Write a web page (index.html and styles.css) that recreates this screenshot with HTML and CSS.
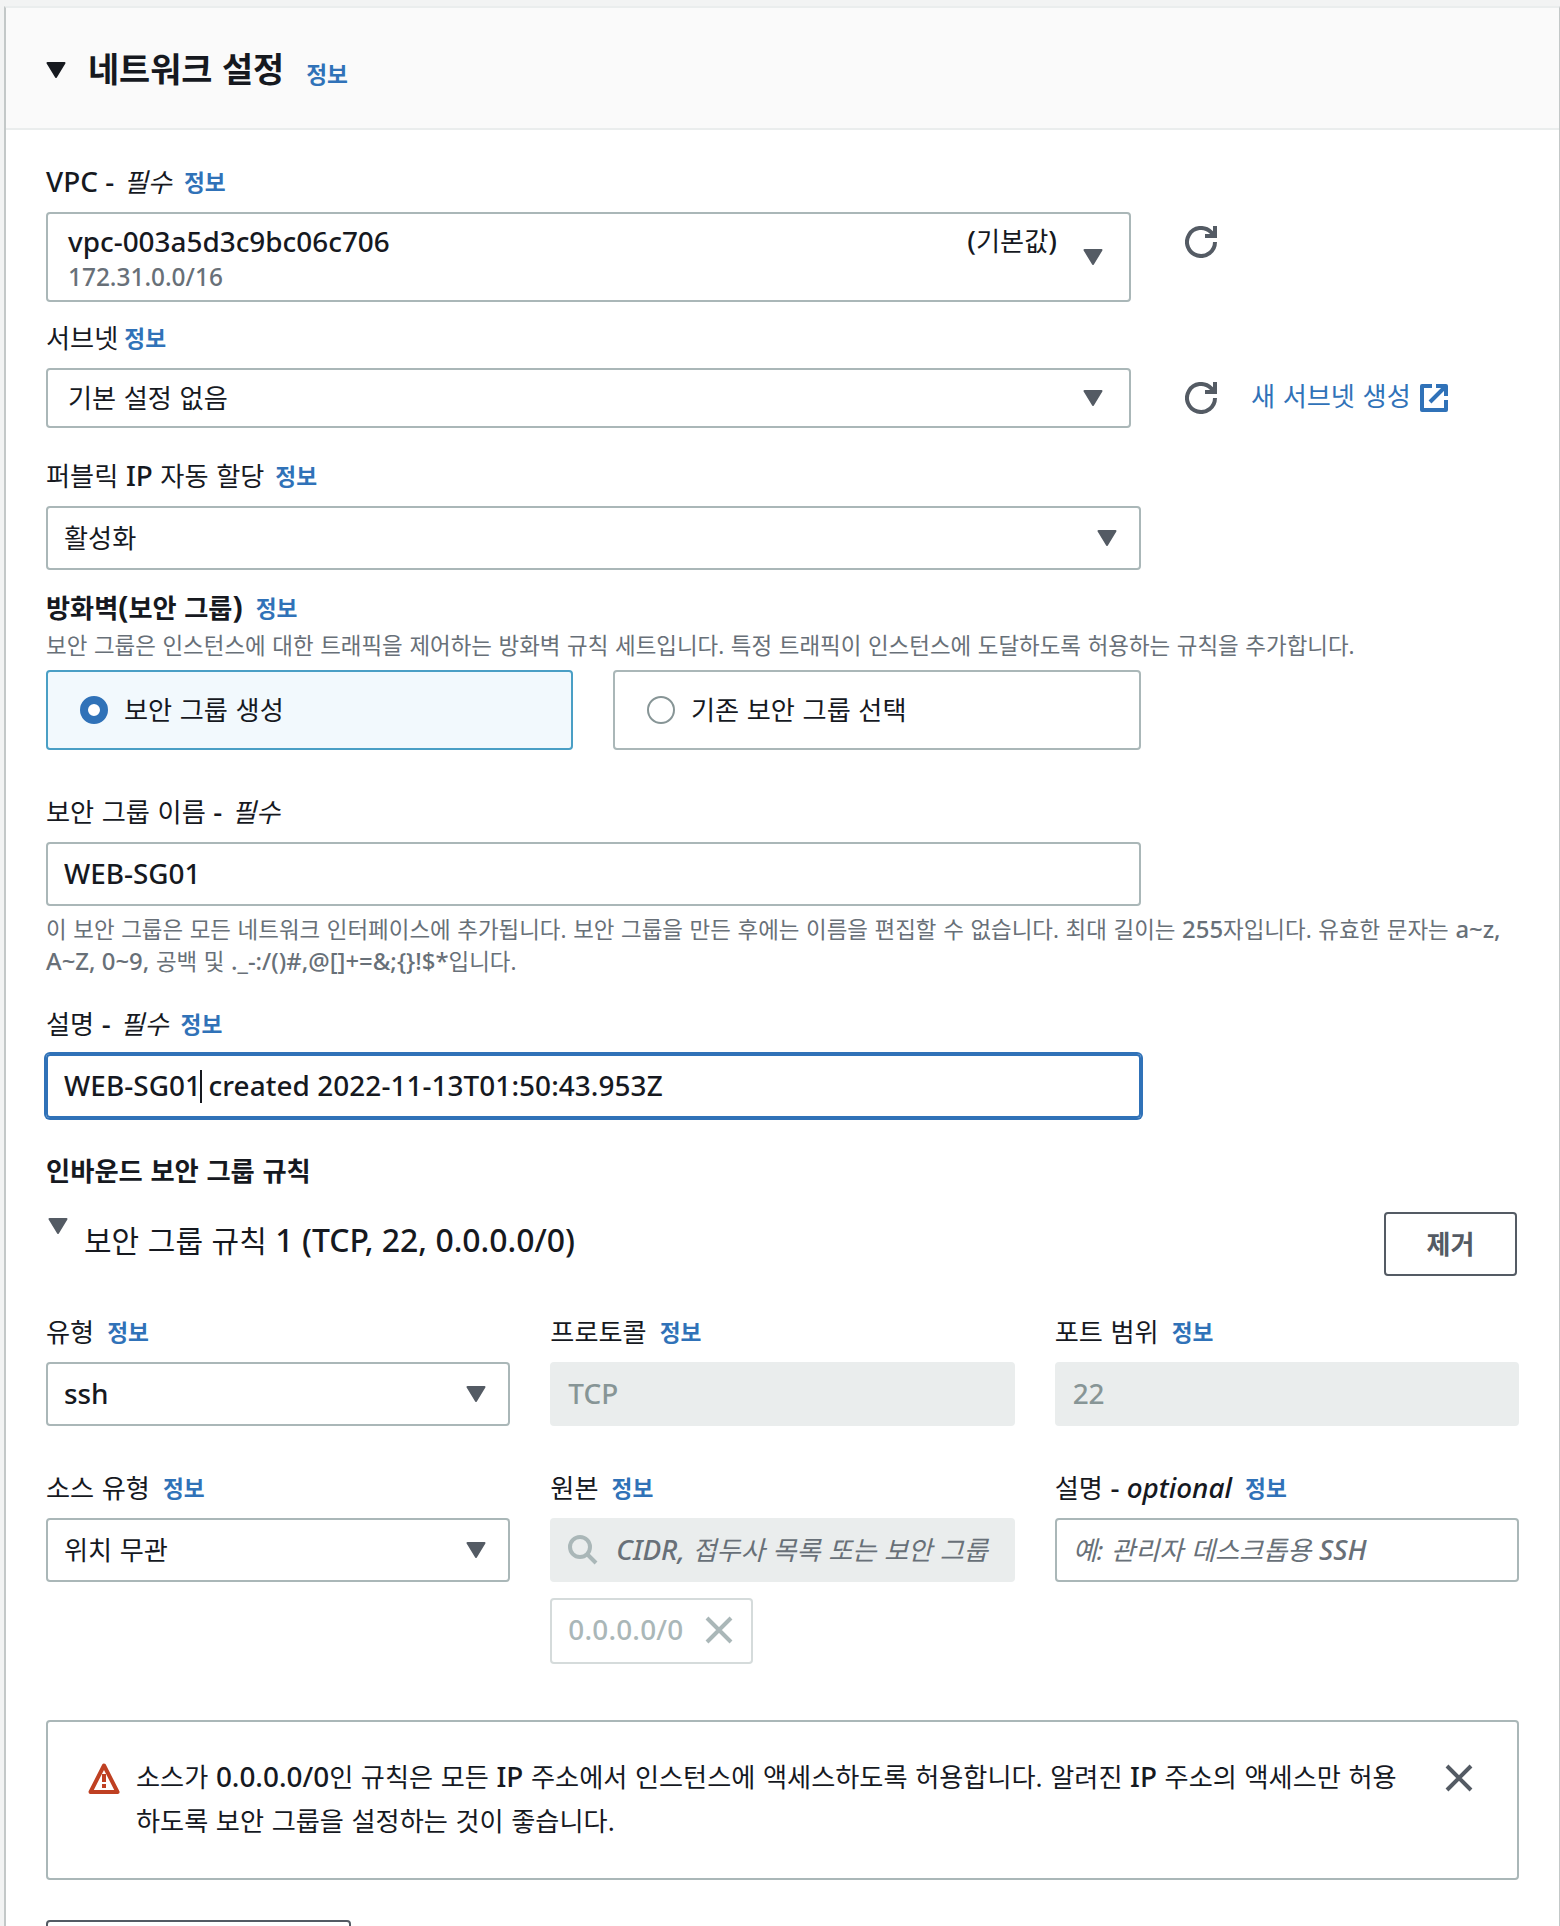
FILE: index.html
```html
<!DOCTYPE html>
<html lang="ko">
<head>
    <meta charset="utf-8">
    <title>네트워크 설정</title>
    <link rel="stylesheet" href="styles.css">
</head>
<body>
    <svg class="defs" width="0" height="0">
        <symbol id="caret" viewBox="0 0 20 16"><path d="M1.5 1h17L10 15z" fill="currentColor" stroke="currentColor" stroke-width="2" stroke-linejoin="round"/></symbol>
        <symbol id="refresh" viewBox="0 0 32 32"><path d="M30 16a14 14 0 1 1-4-9.8l4 4M30 0v10H20" fill="none" stroke="currentColor" stroke-width="4"/></symbol>
        <symbol id="external" viewBox="0 0 28 28"><path d="M12 2H2v24h24V16M16 2h10v10M26 2L10 18" fill="none" stroke="currentColor" stroke-width="4" stroke-linejoin="round"/></symbol>
        <symbol id="search" viewBox="0 0 30 30"><path d="M19.5 19.5l8.5 8.5" fill="none" stroke="currentColor" stroke-width="4"/><circle cx="12" cy="12" r="10" fill="none" stroke="currentColor" stroke-width="4"/></symbol>
        <symbol id="close" viewBox="0 0 28 28"><path d="M2 2l24 24M26 2L2 26" fill="none" stroke="currentColor" stroke-width="4"/></symbol>
        <symbol id="warning" viewBox="0 0 32 32"><path d="M16 3.5L29.5 30H2.5z" fill="none" stroke="currentColor" stroke-width="4" stroke-linejoin="round"/><path d="M16 12v8M16 22v4" stroke="currentColor" stroke-width="4"/></symbol>
    </svg>

    <section class="panel">
        <header class="panel-header">
            <svg class="caret"><use href="#caret"/></svg>
            <h2>네트워크 설정</h2>
            <a class="info">정보</a>
        </header>

        <div class="panel-body">
            <div class="field">
                <div class="label"><span><span class="en">VPC -</span> <em>필수</em></span><a class="info">정보</a></div>
                <div class="row">
                    <div class="control select vpc">
                        <div class="option">
                            <span class="en">vpc-003a5d3c9bc06c706</span>
                            <small>172.31.0.0/16</small>
                        </div>
                        <span class="tag"><span class="en">(</span>기본값<span class="en">)</span></span>
                        <svg class="caret"><use href="#caret"/></svg>
                    </div>
                    <svg class="refresh"><use href="#refresh"/></svg>
                </div>
            </div>

            <div class="field subnet">
                <div class="label tight"><span>서브넷</span><a class="info">정보</a></div>
                <div class="row">
                    <div class="control select short">
                        <span>기본 설정 없음</span>
                        <svg class="caret"><use href="#caret"/></svg>
                    </div>
                    <svg class="refresh"><use href="#refresh"/></svg>
                    <a class="link"><span>새 서브넷 생성</span><svg class="external"><use href="#external"/></svg></a>
                </div>
            </div>

            <div class="field public-ip">
                <div class="label wide"><span>퍼블릭 <span class="en">IP</span> 자동 할당</span><a class="info">정보</a></div>
                <div class="control select">
                    <span>활성화</span>
                    <svg class="caret"><use href="#caret"/></svg>
                </div>
            </div>

            <div class="field firewall">
                <div class="label wide"><b>방화벽<span class="paren">(</span>보안 그룹<span class="paren">)</span></b><a class="info">정보</a></div>
                <p class="hint">보안 그룹은 인스턴스에 대한 트래픽을 제어하는 방화벽 규칙 세트입니다. 특정 트래픽이 인스턴스에 도달하도록 허용하는 규칙을 추가합니다.</p>
                <div class="tiles">
                    <div class="tile selected"><i class="radio"></i>보안 그룹 생성</div>
                    <div class="tile"><i class="radio"></i>기존 보안 그룹 선택</div>
                </div>
            </div>

            <div class="field sg-name">
                <div class="label"><span>보안 그룹 이름 <span class="en">-</span> <em>필수</em></span></div>
                <div class="control"><span class="en">WEB-SG01</span></div>
                <p class="hint">이 보안 그룹은 모든 네트워크 인터페이스에 추가됩니다. 보안 그룹을 만든 후에는 이름을 편집할 수 없습니다. 최대 길이는 <span class="en">255</span>자입니다. 유효한 문자는 <span class="en">a~z,</span><br><span class="en">A~Z, 0~9,</span> 공백 및 <span class="en">._-:/()#,@[]+=&amp;;{}!$*</span>입니다.</p>
            </div>

            <div class="field sg-desc">
                <div class="label"><span>설명 <span class="en">-</span> <em>필수</em></span><a class="info">정보</a></div>
                <div class="control focused"><span class="en">WEB-SG01<i class="cursor"></i> created 2022-11-13T01:50:43.953Z</span></div>
            </div>

            <h3>인바운드 보안 그룹 규칙</h3>
            <div class="rule">
                <svg class="caret"><use href="#caret"/></svg>
                <span class="rule-title">보안 그룹 규칙 <span class="en">1 (TCP, 22, 0.0.0.0/0)</span></span>
                <button>제거</button>
            </div>

            <div class="grid">
                <div class="field">
                    <div class="label wide"><span>유형</span><a class="info">정보</a></div>
                    <div class="control select"><span class="en">ssh</span><svg class="caret"><use href="#caret"/></svg></div>
                </div>
                <div class="field">
                    <div class="label wide"><span>프로토콜</span><a class="info">정보</a></div>
                    <div class="control disabled"><span class="en">TCP</span></div>
                </div>
                <div class="field">
                    <div class="label wide"><span>포트 범위</span><a class="info">정보</a></div>
                    <div class="control disabled"><span class="en">22</span></div>
                </div>
                <div class="field">
                    <div class="label wide"><span>소스 유형</span><a class="info">정보</a></div>
                    <div class="control select"><span>위치 무관</span><svg class="caret"><use href="#caret"/></svg></div>
                </div>
                <div class="field">
                    <div class="label wide"><span>원본</span><a class="info">정보</a></div>
                    <div class="control disabled"><svg class="search-icon"><use href="#search"/></svg><em class="placeholder"><span class="en">CIDR,</span> 접두사 목록 또는 보안 그룹</em></div>
                    <div class="token"><span class="en">0.0.0.0/0</span><svg class="close"><use href="#close"/></svg></div>
                </div>
                <div class="field">
                    <div class="label wide"><span>설명 <span class="en">- <i>optional</i></span></span><a class="info">정보</a></div>
                    <div class="control"><em class="placeholder">예: 관리자 데스크톱용 <span class="en">SSH</span></em></div>
                </div>
            </div>

            <div class="alert">
                <svg class="warning"><use href="#warning"/></svg>
                <p>소스가 <span class="en">0.0.0.0/0</span>인 규칙은 모든 <span class="en">IP</span> 주소에서 인스턴스에 액세스하도록 허용합니다. 알려진 <span class="en">IP</span> 주소의 액세스만 허용<br>하도록 보안 그룹을 설정하는 것이 좋습니다.</p>
                <svg class="close"><use href="#close"/></svg>
            </div>

            <button class="add-rule"></button>
        </div>
    </section>
</body>
</html>
```

FILE: styles.css
```css
* { box-sizing: border-box; }
body { margin: 0; height: 1926px; overflow: hidden; padding: 6px 0 0 4px; background: #f2f3f3; color: #16191f; font: 26.2px/36px "Noto Sans", "Noto Sans CJK KR", sans-serif; word-spacing: 0.03em; }
h2, h3, p { margin: 0; }
svg { display: block; flex: none; }
.defs { position: absolute; }

/* latin runs sit slightly larger and heavier than the hangul */
.en { font-size: 1.065em; font-weight: 500; line-height: 1; word-spacing: 0; }
.paren { font-size: 1.15em; line-height: 1; }
.info { color: #3072b8; font-size: 22.7px; font-weight: bold; }

.panel { height: 1940px; background: #fff; border-top: 2px solid #eaeded; border-left: 2px solid #c3c8c8; border-right: 1px solid #c3c8c8; }
.panel-header { display: flex; align-items: center; height: 122px; padding: 2px 40px 0; background: #fafafa; border-bottom: 2px solid #eaeded; }
.panel-header h2 { margin: 0 22px 0 22px; font-size: 33.8px; line-height: 48px; }
.panel-header .info { padding-top: 11px; }
.panel-body { padding: 34px 40px 0; }

.caret { width: 20px; height: 16px; color: #545b64; }
.panel-header .caret { margin-top: 2px; color: #16191f; }
.refresh { width: 32px; height: 32px; color: #545b64; }
.close { width: 28px; height: 28px; color: #545b64; }

.label { display: flex; align-items: center; gap: 12px; height: 36px; margin-bottom: 12px; white-space: nowrap; }
.label.tight { gap: 6px; }
.label.wide { gap: 13px; }
.label .info { padding-top: 1px; }
.label em { margin-left: 2px; }

.row { display: flex; }
.row .refresh { margin: 14px 0 0 54px; }
.control { display: flex; align-items: center; width: 1095px; height: 64px; padding: 0 16px; border: 2px solid #aab7b8; border-radius: 4px; white-space: nowrap; }
.select { justify-content: space-between; padding-right: 22px; }
.row .control { width: 1085px; padding: 0 26px 0 20px; }
.control.short { height: 60px; }
.control.vpc { height: 90px; }
.option { display: flex; flex-direction: column; flex: 1; padding-top: 3px; }
.option .en { line-height: 36px; }
.option small { color: #687078; font-size: 24.4px; font-weight: 500; line-height: 35px; }
.tag { align-self: flex-start; margin: 9px 26px 0 0; }

.subnet { margin-top: 18px; }
.public-ip { margin-top: 30px; }
.public-ip .label.wide { gap: 11px; }
.firewall { margin-top: 20px; }
.sg-name { margin-top: 44px; }
.sg-desc { margin-top: 28px; }

.link { display: flex; align-items: center; gap: 9px; height: 60px; margin-left: 34px; color: #3072b8; }
.link span { padding-bottom: 4px; }
.external { width: 28px; height: 28px; }

.hint { color: #687078; font-size: 22.45px; line-height: 32px; white-space: nowrap; }
.firewall .label { margin-bottom: 4px; }
.sg-name .hint { margin-top: 8px; }

.tiles { display: grid; grid-template-columns: 527px 528px; gap: 40px; width: 1095px; margin-top: 8px; }
.tile { display: flex; align-items: center; gap: 16px; height: 80px; padding: 0 32px; border: 2px solid #aab7b8; border-radius: 4px; }
.tile.selected { background: #f2f9fd; border-color: #4a9fc5; }
.radio { width: 28px; height: 28px; border: 2px solid #879596; border-radius: 50%; background: #fff; }
.selected .radio { border: 8px solid #3072b8; }

.focused { border-color: #3072b8; box-shadow: 0 0 0 2px #3072b8; }
.focused .en { padding-top: 1px; letter-spacing: 0.08px; }
.cursor { display: inline-block; width: 2px; height: 33px; margin: 0 -1px 0 -1px; background: #16191f; vertical-align: -7px; }

h3 { margin-top: 35px; font-size: 26.3px; line-height: 36px; }
.rule { display: flex; margin-top: 23px; padding-right: 2px; height: 64px; }
.rule .caret { margin: 6px 16px 0 2px; }
.rule-title { flex: 1; font-size: 30px; line-height: 57px; }
button { width: 133px; height: 64px; padding: 0 0 2px; background: #fff; border: 2px solid #545b64; border-radius: 4px; color: #545b64; font: bold 26px "Noto Sans", "Noto Sans CJK KR", sans-serif; }

.grid { display: grid; grid-template-columns: repeat(3, 1fr); gap: 44px 40px; height: 350px; margin-top: 38px; align-items: start; }
.grid .field { min-width: 0; }
.grid .control { width: 100%; }
.disabled { background: #eaeded; border-color: #eaeded; color: #879596; }
.placeholder { color: #687078; }
.search-icon { width: 30px; height: 30px; margin-right: 18px; color: #aab7b8; }
.token { display: flex; align-items: center; justify-content: space-between; width: 203px; height: 66px; margin-top: 16px; padding: 0 18px 2px 16px; border: 2px solid #d5dbdb; border-radius: 4px; color: #aab7b8; }
.token .en { letter-spacing: 0.2px; }
.token .close { color: #aab7b8; }

.alert { display: flex; height: 160px; margin-top: 56px; padding: 33px 44px 0 40px; border: 2px solid #aab7b8; border-radius: 4px; }
.alert p { flex: 1; margin-left: 16px; line-height: 44px; white-space: nowrap; }
.warning { width: 32px; height: 32px; margin-top: 7px; color: #bf4022; }
.alert .close { margin-top: 9px; }

.add-rule { display: block; width: 305px; margin-top: 40px; }
```
